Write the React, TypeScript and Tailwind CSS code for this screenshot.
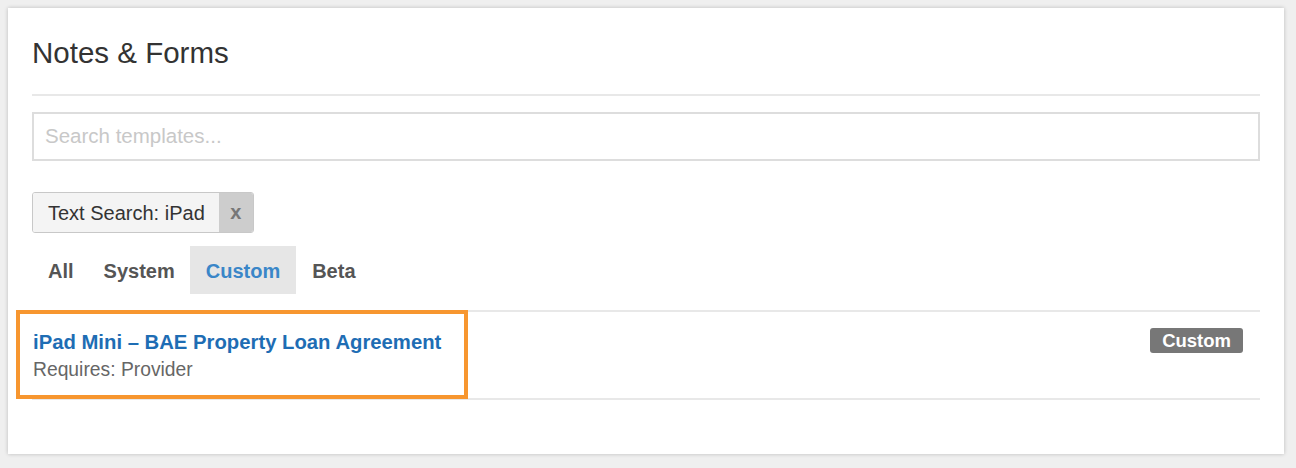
import React from "react";

export default function App() {
  return (
    <div className="min-h-screen bg-[#efefef] p-2 font-['Liberation_Sans',Arial,sans-serif]">
      <div className="bg-white w-[1276px] h-[446px] pt-[28px] px-6 shadow-[0_0_4px_rgba(0,0,0,0.22)]">
        <h1 className="text-[29.5px] leading-[34px] text-[#333] font-normal">Notes &amp; Forms</h1>
        <div className="mt-[24px] h-[2px] bg-[#e8e8e8]" />
        <div className="mt-[16px] h-[49px] border-2 border-[#dddddd] flex items-center px-[11px]">
          <input
            className="w-full outline-none text-[20.5px] text-[#333] placeholder:text-[#c8c8c8] bg-transparent"
            placeholder="Search templates..."
          />
        </div>
        <div className="mt-[31px] flex">
          <div className="flex h-[41px] border border-[#c8c8c8] rounded-[3px] overflow-hidden">
            <div className="bg-[#f4f4f4] pl-[15px] pr-[14px] flex items-center text-[20px] text-[#333]">
              Text Search: iPad
            </div>
            <div className="w-[34px] bg-[#cdcdcd] flex items-center justify-center text-[20px] font-bold text-[#777] pb-[2px]">
              x
            </div>
          </div>
        </div>
        <div className="mt-[13px] flex h-[48px]">
          <div className="pl-4 pr-[14px] pt-[2px] flex items-center text-[20px] font-bold text-[#555]">All</div>
          <div className="pl-4 pr-[15px] pt-[2px] flex items-center text-[20px] font-bold text-[#555]">System</div>
          <div className="px-4 pt-[2px] flex items-center text-[20px] font-bold bg-[#e6e6e6] text-[#3a86c8]">Custom</div>
          <div className="px-4 pt-[2px] flex items-center text-[20px] font-bold text-[#555]">Beta</div>
        </div>
        <div className="mt-[16px] h-[2px] bg-[#e8e8e8]" />
        <div className="relative flex justify-between h-[86px] pt-[18px] pl-[1px] pr-[17px]">
          <div>
            <div className="text-[20.3px] leading-[24px] font-bold text-[#1e6db4]">
              iPad Mini – BAE Property Loan Agreement
            </div>
            <div className="mt-[4px] text-[19.3px] leading-[24px] text-[#666]">Requires: Provider</div>
          </div>
          <div className="mt-[-2px] self-start h-[25px] px-[12px] rounded-[3px] bg-[#777] text-white font-bold text-[18.5px] leading-[25px]">
            Custom
          </div>
          <div className="absolute left-[-16px] top-[-2px] w-[452px] h-[89px] border-[4px] border-[#f7962f] pointer-events-none" />
        </div>
        <div className="h-[2px] bg-[#e8e8e8]" />
      </div>
    </div>
  );
}
